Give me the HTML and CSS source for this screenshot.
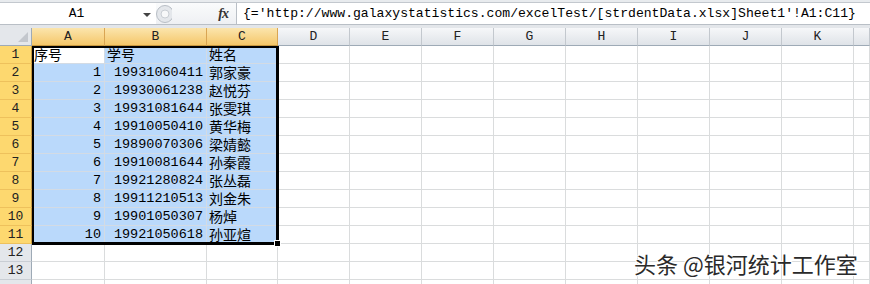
FILE: index.html
```html
<!DOCTYPE html>
<html>
<head>
    <title>外部引用 - Excel</title>
    <link rel="stylesheet" href="styles.css">
</head>
<body>
    <div class="app">
        <div class="ribbon-edge"></div>
        <div class="fbar">
            <div class="namebox">
                <span class="name">A1</span>
                <span class="drop"></span>
            </div>
            <div class="tools">
                <svg class="grip" width="16" height="20" viewBox="0 0 16 20">
                    <circle cx="9" cy="10" r="8.5" fill="#e4e7eb" stroke="#b8bec5"/>
                    <circle cx="9" cy="10" r="4" fill="#f7f8f9" stroke="#c9ced4"/>
                </svg>
                <span class="fx">fx</span>
            </div>
            <div class="formula">{='http://www.galaxystatistics.com/excelTest/[strdentData.xlsx]Sheet1'!A1:C11}</div>
        </div>
        <div class="strip"></div>

        <div class="sheet">
            <!-- column headers -->
            <div class="h corner"></div>
            <div class="h on">A</div>
            <div class="h on">B</div>
            <div class="h on">C</div>
            <div class="h">D</div>
            <div class="h">E</div>
            <div class="h">F</div>
            <div class="h">G</div>
            <div class="h">H</div>
            <div class="h">I</div>
            <div class="h">J</div>
            <div class="h">K</div>
            <div class="h"></div>

            <div class="rh on">1</div>
            <div class="c active t">序号</div>
            <div class="c sel t">学号</div>
            <div class="c sel t">姓名</div>
            <div class="c"></div><div class="c"></div><div class="c"></div><div class="c"></div>
            <div class="c"></div><div class="c"></div><div class="c"></div><div class="c"></div><div class="c"></div>

            <div class="rh on">2</div>
            <div class="c sel n">1</div>
            <div class="c sel n">19931060411</div>
            <div class="c sel t">郭家豪</div>
            <div class="c"></div><div class="c"></div><div class="c"></div><div class="c"></div>
            <div class="c"></div><div class="c"></div><div class="c"></div><div class="c"></div><div class="c"></div>

            <div class="rh on">3</div>
            <div class="c sel n">2</div>
            <div class="c sel n">19930061238</div>
            <div class="c sel t">赵悦芬</div>
            <div class="c"></div><div class="c"></div><div class="c"></div><div class="c"></div>
            <div class="c"></div><div class="c"></div><div class="c"></div><div class="c"></div><div class="c"></div>

            <div class="rh on">4</div>
            <div class="c sel n">3</div>
            <div class="c sel n">19931081644</div>
            <div class="c sel t">张雯琪</div>
            <div class="c"></div><div class="c"></div><div class="c"></div><div class="c"></div>
            <div class="c"></div><div class="c"></div><div class="c"></div><div class="c"></div><div class="c"></div>

            <div class="rh on">5</div>
            <div class="c sel n">4</div>
            <div class="c sel n">19910050410</div>
            <div class="c sel t">黄华梅</div>
            <div class="c"></div><div class="c"></div><div class="c"></div><div class="c"></div>
            <div class="c"></div><div class="c"></div><div class="c"></div><div class="c"></div><div class="c"></div>

            <div class="rh on">6</div>
            <div class="c sel n">5</div>
            <div class="c sel n">19890070306</div>
            <div class="c sel t">梁婧懿</div>
            <div class="c"></div><div class="c"></div><div class="c"></div><div class="c"></div>
            <div class="c"></div><div class="c"></div><div class="c"></div><div class="c"></div><div class="c"></div>

            <div class="rh on">7</div>
            <div class="c sel n">6</div>
            <div class="c sel n">19910081644</div>
            <div class="c sel t">孙秦霞</div>
            <div class="c"></div><div class="c"></div><div class="c"></div><div class="c"></div>
            <div class="c"></div><div class="c"></div><div class="c"></div><div class="c"></div><div class="c"></div>

            <div class="rh on">8</div>
            <div class="c sel n">7</div>
            <div class="c sel n">19921280824</div>
            <div class="c sel t">张丛磊</div>
            <div class="c"></div><div class="c"></div><div class="c"></div><div class="c"></div>
            <div class="c"></div><div class="c"></div><div class="c"></div><div class="c"></div><div class="c"></div>

            <div class="rh on">9</div>
            <div class="c sel n">8</div>
            <div class="c sel n">19911210513</div>
            <div class="c sel t">刘金朱</div>
            <div class="c"></div><div class="c"></div><div class="c"></div><div class="c"></div>
            <div class="c"></div><div class="c"></div><div class="c"></div><div class="c"></div><div class="c"></div>

            <div class="rh on">10</div>
            <div class="c sel n">9</div>
            <div class="c sel n">19901050307</div>
            <div class="c sel t">杨焯</div>
            <div class="c"></div><div class="c"></div><div class="c"></div><div class="c"></div>
            <div class="c"></div><div class="c"></div><div class="c"></div><div class="c"></div><div class="c"></div>

            <div class="rh on">11</div>
            <div class="c sel n">10</div>
            <div class="c sel n">19921050618</div>
            <div class="c sel t">孙亚煊</div>
            <div class="c"></div><div class="c"></div><div class="c"></div><div class="c"></div>
            <div class="c"></div><div class="c"></div><div class="c"></div><div class="c"></div><div class="c"></div>

            <div class="rh">12</div>
            <div class="c"></div><div class="c"></div><div class="c"></div><div class="c"></div>
            <div class="c"></div><div class="c"></div><div class="c"></div><div class="c"></div>
            <div class="c"></div><div class="c"></div><div class="c"></div><div class="c"></div>

            <div class="rh">13</div>
            <div class="c"></div><div class="c"></div><div class="c"></div><div class="c"></div>
            <div class="c"></div><div class="c"></div><div class="c"></div><div class="c"></div>
            <div class="c"></div><div class="c"></div><div class="c"></div><div class="c"></div>

            <div class="rh"></div>
            <div class="c"></div><div class="c"></div><div class="c"></div><div class="c"></div>
            <div class="c"></div><div class="c"></div><div class="c"></div><div class="c"></div>
            <div class="c"></div><div class="c"></div><div class="c"></div><div class="c"></div>

            <!-- selection frame over A1:C11 -->
            <div class="selection"><span class="handle"></span></div>
        </div>

        <div class="watermark">头条 @银河统计工作室</div>
    </div>
</body>
</html>
```

FILE: styles.css
```css
body {
    margin: 0;
    background-color: #fff;
    font-family: "Liberation Mono", "Noto Sans CJK SC", monospace;
    color: #000;
}
.app {
    position: relative;
    width: 870px;
    height: 284px;
    overflow: hidden;
}

/* formula bar */
.ribbon-edge {
    height: 2px;
    background-color: #e8ebee;
    border-bottom: 1px solid #c3c8ce;
}
.fbar {
    display: flex;
    height: 21px;
    border-bottom: 1px solid #b9bfc6;
}
.namebox {
    width: 156px;
    display: flex;
    align-items: center;
    background-color: #fff;
}
.name {
    flex: 1;
    text-align: center;
    font-size: 13px;
    padding-left: 10px;
}
.drop {
    width: 0;
    height: 0;
    border-left: 4px solid transparent;
    border-right: 4px solid transparent;
    border-top: 4px solid #444;
    margin-right: 5px;
    margin-top: 2px;
}
.tools {
    width: 80px;
    display: flex;
    align-items: center;
    justify-content: space-between;
    background: linear-gradient(#fafbfc, #eef0f3);
    border-right: 1px solid #b9bfc6;
}
.fx {
    font-family: "Liberation Serif", serif;
    font-style: italic;
    font-weight: bold;
    font-size: 14px;
    color: #333;
    margin-right: 8px;
    letter-spacing: -1px;
}
.formula {
    flex: 1;
    font-size: 13.1px;
    line-height: 21px;
    padding-left: 6px;
    white-space: nowrap;
    overflow: hidden;
}
.strip {
    height: 3px;
    background-color: #e3e6ea;
}

/* grid */
.sheet {
    position: relative;
    display: grid;
    grid-template-columns: 32px 73px 102px 71px repeat(8, 72px) 16px;
    grid-auto-rows: 18px;
}
.sheet > div {
    box-sizing: border-box;
}
.c {
    border-right: 1px solid #dadcdd;
    border-bottom: 1px solid #dadcdd;
    font-size: 13.5px;
    line-height: 17px;
    white-space: nowrap;
}
.sel {
    background-color: #bad9fb;
    border-color: #d3dbe4;
}
.active {
    background-color: #fff;
    border-right-color: #d3dbe4;
    border-bottom-color: #d3dbe4;
}
.n {
    text-align: right;
    padding-right: 3px;
}
.t {
    font-family: "Noto Sans CJK SC", sans-serif;
    font-size: 14px;
    line-height: 17px;
    padding-left: 2px;
}

.h {
    background: linear-gradient(#f6f7f9, #dfe3e8);
    border-right: 1px solid #c3c8ce;
    border-bottom: 1px solid #9eaab6;
    text-align: center;
    font-size: 13px;
    line-height: 18px;
    color: #222;
}
.h.on {
    background: linear-gradient(#fbe5ad, #f5c76a);
    border-right-color: #d9a553;
    border-bottom-color: #c8983f;
}
.corner {
    position: relative;
    background: #e4e7eb;
    border-right-color: #9eaab6;
}
.corner::after {
    content: "";
    position: absolute;
    right: 3px;
    bottom: 3px;
    border-left: 10px solid transparent;
    border-bottom: 10px solid #c3c7cd;
}
.rh {
    background-color: #e4e7eb;
    border-right: 1px solid #9eaab6;
    border-bottom: 1px solid #c9ced4;
    text-align: center;
    font-size: 13px;
    line-height: 18px;
    color: #222;
}
.rh.on {
    background-color: #fdd86f;
    border-right-color: #c8983f;
    border-bottom-color: #eec15c;
}

.selection {
    position: absolute;
    left: 32px;
    top: 18px;
    width: 247px;
    height: 199px;
    box-sizing: border-box;
    border: 2px solid #000;
    border-right-width: 3px;
    border-bottom-width: 3px;
}
.handle {
    position: absolute;
    right: -5px;
    bottom: -5px;
    width: 5px;
    height: 5px;
    background-color: #000;
    border: 1px solid #fff;
}

.watermark {
    position: absolute;
    left: 634px;
    top: 250px;
    font-family: "Noto Sans CJK SC", sans-serif;
    font-size: 22px;
    line-height: 26px;
    color: #2a2a2a;
    text-shadow: 1px 1px 0 #fff, -1px -1px 0 #fff, 1px -1px 0 #fff, -1px 1px 0 #fff;
    white-space: nowrap;
}
```
